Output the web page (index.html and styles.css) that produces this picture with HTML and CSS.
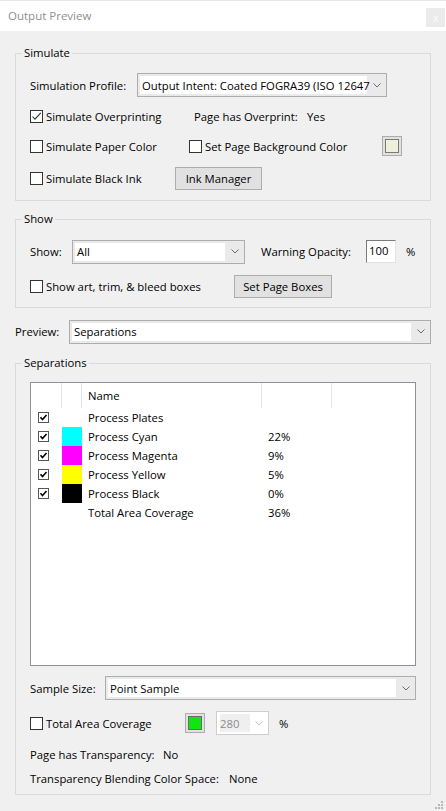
FILE: index.html
```
<!DOCTYPE html>
<html>
<head>
<meta charset="utf-8">
<title>Output Preview</title>
<link rel="stylesheet" href="styles.css">
</head>
<body>
<div class="window">
  <div class="titlebar">
    <span class="title">Output Preview</span>
    <span class="close">x</span>
  </div>
  <div class="content">
    <fieldset class="group g-sim">
      <legend>Simulate</legend>
      <div class="gbody">
        <div class="row r-profile">
          <span class="cell profile-lbl">Simulation Profile:</span>
          <div class="combo c-profile"><span class="field">Output Intent: Coated FOGRA39 (ISO 12647</span><span class="arrow"><svg width="8" height="5" viewBox="0 0 8 5"><polyline points="0.5,0.5 4,4 7.5,0.5" fill="none" stroke="#6a6a6a" stroke-width="1"/></svg></span></div>
        </div>
        <div class="row r-over">
          <label class="chk cell over-chk"><span class="box"><svg width="11" height="11" viewBox="0 0 11 11"><polyline points="1.5,5.5 4,8.2 9.8,1.8" fill="none" stroke="#333" stroke-width="1.1"/></svg></span>Simulate Overprinting</label>
          <span class="cell over-lbl">Page has Overprint:</span><span>Yes</span>
        </div>
        <div class="row r-paper">
          <label class="chk cell paper-chk"><span class="box"></span>Simulate Paper Color</label>
          <label class="chk cell bg-chk"><span class="box"></span>Set Page Background Color</label>
          <span class="swatch"><span class="swatch-in cream"></span></span>
        </div>
        <div class="row r-black">
          <label class="chk cell black-chk"><span class="box"></span>Simulate Black Ink</label>
          <span class="btn b-ink">Ink Manager</span>
        </div>
      </div>
    </fieldset>

    <fieldset class="group g-show">
      <legend>Show</legend>
      <div class="gbody">
        <div class="row r-show">
          <span class="cell show-lbl">Show:</span>
          <div class="combo c-show"><span class="field">All</span><span class="arrow"><svg width="8" height="5" viewBox="0 0 8 5"><polyline points="0.5,0.5 4,4 7.5,0.5" fill="none" stroke="#6a6a6a" stroke-width="1"/></svg></span></div>
          <span class="cell warn-lbl">Warning Opacity:</span>
          <span class="textbox">100</span>
          <span class="pct">%</span>
        </div>
        <div class="row r-boxes">
          <label class="chk cell boxes-chk"><span class="box"></span>Show art, trim, &amp; bleed boxes</label>
          <span class="btn b-boxes">Set Page Boxes</span>
        </div>
      </div>
    </fieldset>

    <div class="row r-preview">
      <span class="cell preview-lbl">Preview:</span>
      <div class="combo c-preview"><span class="field">Separations</span><span class="arrow"><svg width="8" height="5" viewBox="0 0 8 5"><polyline points="0.5,0.5 4,4 7.5,0.5" fill="none" stroke="#6a6a6a" stroke-width="1"/></svg></span></div>
    </div>

    <fieldset class="group g-sep">
      <legend>Separations</legend>
      <div class="gbody">
        <div class="seplist">
          <div class="lhead">
            <span class="hc hc1"></span><span class="hc hc2"></span><span class="hc hc3">Name</span><span class="hc hc4"></span><span class="hc hc5"></span>
          </div>
          <div class="lrow"><span class="c1"><span class="tick"><svg width="11" height="11" viewBox="0 0 11 11"><rect x="0.5" y="0.5" width="10" height="10" fill="#fff" stroke="#555"/><polyline points="2.5,5.2 4.5,7.5 8.5,3" fill="none" stroke="#000" stroke-width="1.6"/></svg></span></span><span class="c2"></span><span class="c3">Process Plates</span><span class="c4"></span></div>
          <div class="lrow"><span class="c1"><span class="tick"><svg width="11" height="11" viewBox="0 0 11 11"><rect x="0.5" y="0.5" width="10" height="10" fill="#fff" stroke="#555"/><polyline points="2.5,5.2 4.5,7.5 8.5,3" fill="none" stroke="#000" stroke-width="1.6"/></svg></span></span><span class="c2 cyan"></span><span class="c3">Process Cyan</span><span class="c4">22%</span></div>
          <div class="lrow"><span class="c1"><span class="tick"><svg width="11" height="11" viewBox="0 0 11 11"><rect x="0.5" y="0.5" width="10" height="10" fill="#fff" stroke="#555"/><polyline points="2.5,5.2 4.5,7.5 8.5,3" fill="none" stroke="#000" stroke-width="1.6"/></svg></span></span><span class="c2 magenta"></span><span class="c3">Process Magenta</span><span class="c4">9%</span></div>
          <div class="lrow"><span class="c1"><span class="tick"><svg width="11" height="11" viewBox="0 0 11 11"><rect x="0.5" y="0.5" width="10" height="10" fill="#fff" stroke="#555"/><polyline points="2.5,5.2 4.5,7.5 8.5,3" fill="none" stroke="#000" stroke-width="1.6"/></svg></span></span><span class="c2 yellow"></span><span class="c3">Process Yellow</span><span class="c4">5%</span></div>
          <div class="lrow"><span class="c1"><span class="tick"><svg width="11" height="11" viewBox="0 0 11 11"><rect x="0.5" y="0.5" width="10" height="10" fill="#fff" stroke="#555"/><polyline points="2.5,5.2 4.5,7.5 8.5,3" fill="none" stroke="#000" stroke-width="1.6"/></svg></span></span><span class="c2 black"></span><span class="c3">Process Black</span><span class="c4">0%</span></div>
          <div class="lrow"><span class="c1"></span><span class="c2"></span><span class="c3">Total Area Coverage</span><span class="c4">36%</span></div>
        </div>

        <div class="row r-sample">
          <span class="cell sample-lbl">Sample Size:</span>
          <div class="combo c-sample"><span class="field">Point Sample</span><span class="arrow"><svg width="8" height="5" viewBox="0 0 8 5"><polyline points="0.5,0.5 4,4 7.5,0.5" fill="none" stroke="#6a6a6a" stroke-width="1"/></svg></span></div>
        </div>
        <div class="row r-tac">
          <label class="chk cell tac-chk"><span class="box"></span>Total Area Coverage</label>
          <span class="swatch"><span class="swatch-in green"></span></span>
          <div class="combo-dis"><span class="field">280</span><span class="arrow"><svg width="8" height="5" viewBox="0 0 8 5"><polyline points="0.5,0.5 4,4 7.5,0.5" fill="none" stroke="#c4c4c4" stroke-width="1"/></svg></span></div>
          <span class="pct">%</span>
        </div>
        <div class="row r-trans">
          <span class="cell trans-lbl">Page has Transparency:</span><span>No</span>
        </div>
        <div class="row r-blend">
          <span class="cell blend-lbl">Transparency Blending Color Space:</span><span>None</span>
        </div>
      </div>
    </fieldset>
  </div>
  <svg class="grip" width="8" height="8" viewBox="0 0 8 8">
    <rect x="6" y="0" width="2" height="2" fill="#b8b8b8"/>
    <rect x="3" y="3" width="2" height="2" fill="#b8b8b8"/>
    <rect x="6" y="3" width="2" height="2" fill="#b8b8b8"/>
    <rect x="0" y="6" width="2" height="2" fill="#b8b8b8"/>
    <rect x="3" y="6" width="2" height="2" fill="#b8b8b8"/>
    <rect x="6" y="6" width="2" height="2" fill="#b8b8b8"/>
  </svg>
</div>
</body>
</html>
```
FILE: styles.css
```
* { box-sizing: border-box; }
html, body { margin: 0; padding: 0; }
body {
  background: #f0f0f0;
  font-family: "Open Sans", "Noto Sans", sans-serif;
  font-size: 11.3px;
  color: #000;
}
.window {
  position: relative;
  width: 446px;
  height: 811px;
  overflow: hidden;
}
.titlebar {
  height: 31px;
  background: #fff;
  border-top: 1px solid #e6e6e6;
  display: flex;
  justify-content: space-between;
  align-items: center;
  padding-left: 8px;
}
.title { color: #8f8f8f; line-height: 16px; font-size: 11.5px; }
.close {
  align-self: flex-start;
  margin-top: 7px;
  margin-right: 1px;
  width: 19px;
  height: 19px;
  background: #ebebeb;
  color: #fbfbfb;
  font-size: 10px;
  display: flex;
  align-items: center;
  justify-content: center;
}
.content { padding: 0 15px; }

.group {
  margin: 0;
  padding: 0 0 10px;
  border: 1px solid #dadada;
  min-width: 0;
}
.group legend {
  margin-left: 6px;
  padding: 0 2px;
  line-height: 16px;
}
.gbody { padding: 0 14px; }

.g-sim { margin-top: 14px; }
.g-show { margin-top: 10px; padding-bottom: 9px; }
.g-sep { margin-top: 12px; padding-bottom: 8px; }

.row {
  display: flex;
  align-items: center;
  white-space: nowrap;
}
.cell { flex: none; }

/* simulate */
.r-profile { margin-top: 12px; height: 24px; }
.profile-lbl { width: 107px; }
.c-profile { width: 250px; }
.c-profile .arrow { width: 15px; }
.r-over { margin-top: 8px; height: 22px; }
.over-chk { width: 164px; }
.over-lbl { width: 113px; }
.r-paper { margin-top: 8px; height: 22px; }
.paper-chk { width: 159px; }
.bg-chk { width: 193px; }
.r-black { margin-top: 10px; height: 23px; }
.black-chk { width: 145px; }
.b-ink { width: 87px; height: 23px; }

/* show */
.r-show { margin-top: 13px; height: 23px; }
.show-lbl { width: 42px; }
.c-show { width: 173px; height: 23px; }
.warn-lbl { width: 105px; margin-left: 16px; }
.textbox {
  width: 30px;
  height: 23px;
  background: #fff;
  border-top: 1px solid #7a7a7a;
  border-left: 1px solid #7a7a7a;
  border-right: 1px solid #e3e3e3;
  border-bottom: 1px solid #e3e3e3;
  padding-left: 2px;
  line-height: 20px;
}
.pct { margin-left: 10px; }
.r-boxes { margin-top: 12px; height: 23px; }
.boxes-chk { width: 204px; }
.b-boxes { width: 98px; height: 23px; }

/* preview */
.r-preview { margin-top: 12px; height: 23px; }
.preview-lbl { width: 54px; }
.c-preview { flex: 1; height: 23px; }

/* controls */
.combo {
  display: flex;
  height: 24px;
  border: 1px solid #adadad;
  background: #eaeaea;
  padding: 2px 0 2px 2px;
}
.combo .field {
  flex: 1;
  min-width: 0;
  background: #fff;
  padding-left: 2px;
  display: flex;
  align-items: center;
}
.combo .arrow {
  width: 19px;
  flex: none;
  display: flex;
  align-items: center;
  justify-content: center;
}
.combo-dis {
  display: flex;
  width: 53px;
  height: 24px;
  margin-left: 11px;
  border: 1px solid #cfcfcf;
  background: #fff;
  padding: 2px 0 2px 3px;
}
.combo-dis .field {
  width: 30px;
  background: #efefef;
  color: #8d8d8d;
  display: flex;
  align-items: center;
}
.combo-dis .arrow {
  flex: 1;
  display: flex;
  align-items: center;
  justify-content: center;
}
.chk {
  display: flex;
  align-items: center;
}
.box {
  width: 13px;
  height: 13px;
  border: 1px solid #333;
  background: #fff;
  margin-right: 3px;
  display: flex;
  align-items: center;
  justify-content: center;
  flex: none;
}
.btn {
  display: flex;
  align-items: center;
  justify-content: center;
  border: 1px solid #adadad;
  background: #e1e1e1;
  flex: none;
}
.swatch {
  width: 20px;
  height: 20px;
  border: 1px solid #adadad;
  background: #e1e1e1;
  padding: 2px;
  flex: none;
}
.swatch-in {
  display: block;
  width: 100%;
  height: 100%;
  border: 1px solid #7a7a7a;
}
.cream { background: #eef0dc; }
.green { background: #12e312; border-color: #6b6b6b; }

/* separations list */
.seplist {
  margin-top: 11px;
  height: 284px;
  border: 1px solid #8f9199;
  background: #fff;
}
.lhead {
  display: flex;
  height: 25px;
}
.hc {
  flex: none;
  height: 25px;
  border-right: 1px solid #e5e5e5;
  display: flex;
  align-items: center;
}
.hc1 { width: 31px; }
.hc2 { width: 20px; }
.hc3 { width: 180px; padding-left: 6px; }
.hc4 { width: 70px; }
.hc5 { flex: 1; border-right: 0; }
.lrow {
  display: flex;
  height: 19px;
  align-items: stretch;
}
.lrow > span { flex: none; display: flex; align-items: center; }
.c1 { width: 31px; padding-left: 7px; }
.c2 { width: 20px; }
.c3 { width: 180px; padding-left: 6px; }
.c4 { width: 70px; padding-left: 6px; }
.tick { display: flex; }
.cyan { background: #00ffff; }
.magenta { background: #ff00ff; }
.yellow { background: #ffff00; }
.black { background: #000; }

.r-sample { margin-top: 10px; height: 24px; }
.sample-lbl { width: 75px; }
.c-sample { flex: 1; }
.r-tac { margin-top: 11px; height: 24px; }
.tac-chk { width: 155px; }
.r-trans { margin-top: 11px; height: 16px; }
.trans-lbl { width: 133px; }
.r-blend { margin-top: 8px; height: 16px; }
.blend-lbl { width: 199px; }

.grip {
  position: absolute;
  right: 3px;
  bottom: 2px;
}
```
